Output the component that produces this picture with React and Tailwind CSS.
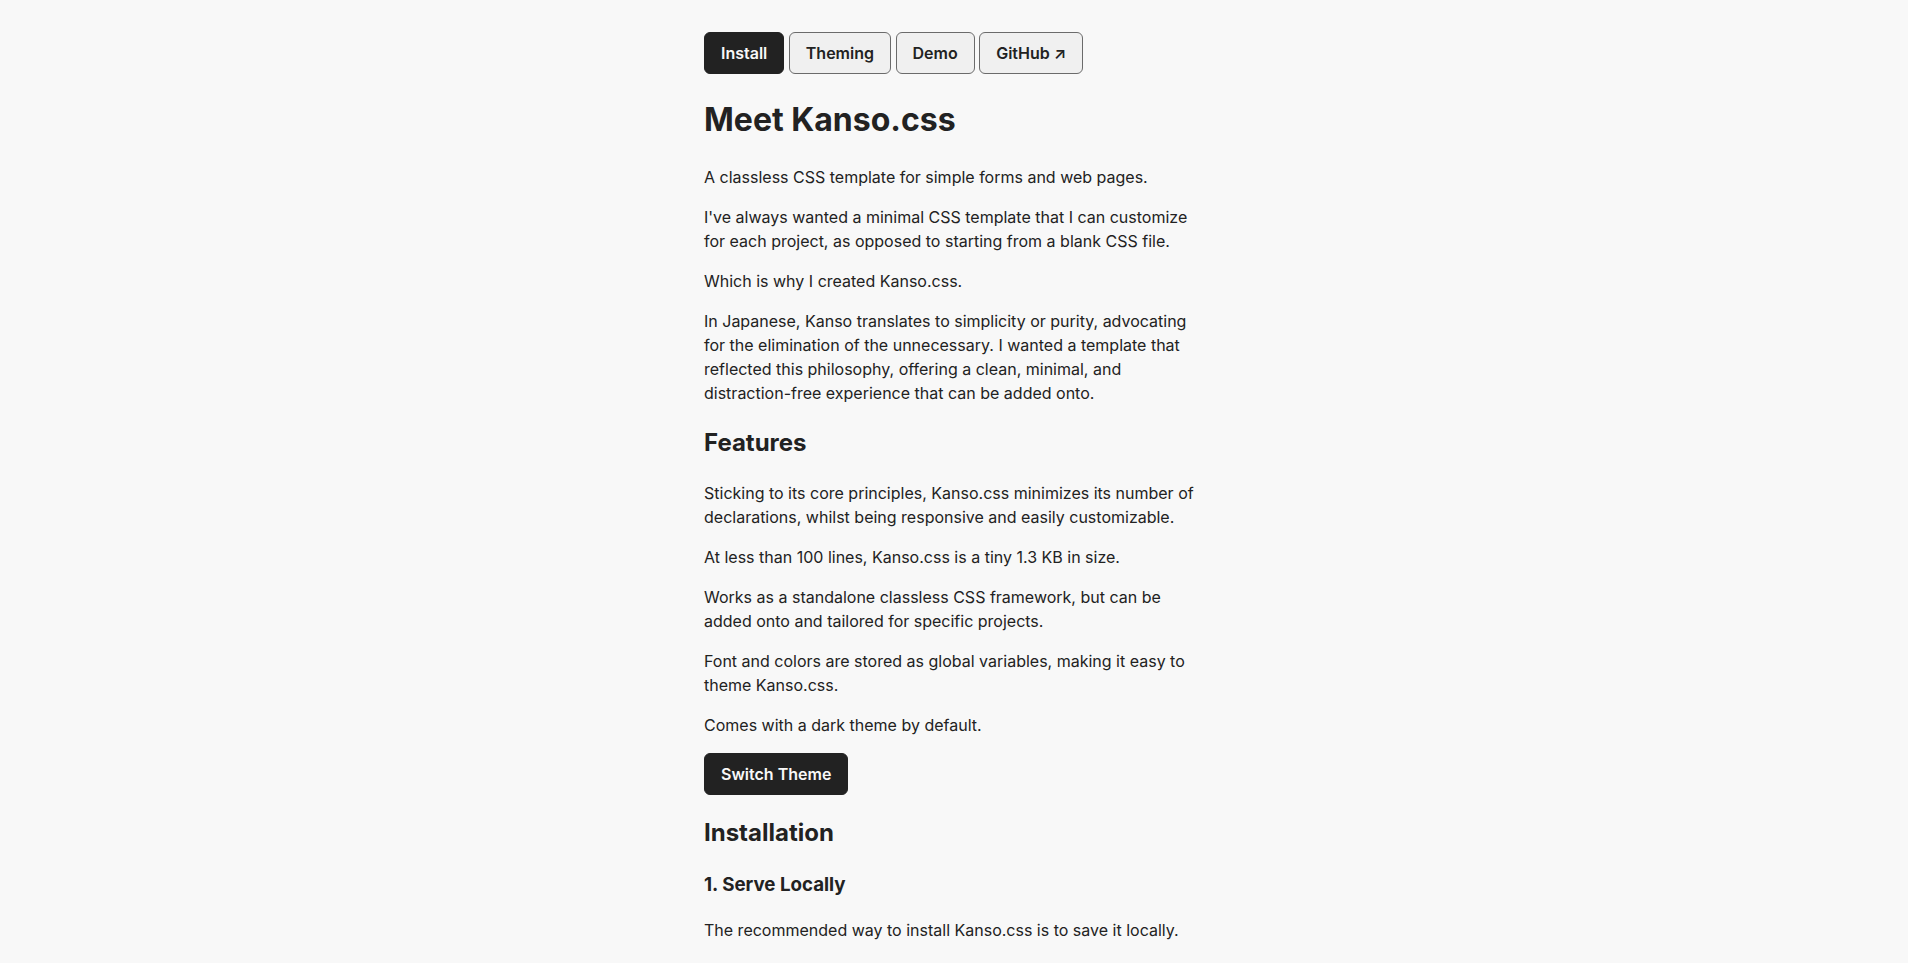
const NAV=[
  {label:"Install",active:true},
  {label:"Theming"},
  {label:"Demo"},
  {label:"GitHub ↗"},
];

const P=({children})=><p className="my-4">{children}</p>;

const App=()=>{
  return (
    <div className="min-h-screen bg-[#f8f8f8] text-[#222222] text-[16px] leading-[1.5]" style={{fontFamily:"Inter, 'Noto Sans', sans-serif"}}>
      <main className="mx-auto w-[500px] pt-[32px]">
        <nav className="flex gap-[4.5px]">
          {NAV.map(n=>(
            <button key={n.label}
              className={`px-4 py-2 leading-6 font-semibold rounded-[6px] border ${n.active?"bg-[#222222] border-[#222222] text-[#f8f8f8]":"bg-[#f0f0f0] border-[#6b6b6b] text-[#222222]"}`}>
              {n.label}
            </button>
          ))}
        </nav>

        <h1 className="text-[32px] leading-[48px] font-bold mt-[22px] mb-[21.44px]">Meet Kanso.css</h1>
        <P>A classless CSS template for simple forms and web pages.</P>
        <P>I've always wanted a minimal CSS template that I can customize for each project, as opposed to starting from a blank CSS file.</P>
        <P>Which is why I created Kanso.css.</P>
        <P>In Japanese, Kanso translates to simplicity or purity, advocating for the elimination of the unnecessary. I wanted a template that reflected this philosophy, offering a clean, minimal, and distraction-free experience that can be added onto.</P>

        <h2 className="text-[24px] leading-[36px] font-bold my-5">Features</h2>
        <P>Sticking to its core principles, Kanso.css minimizes its number of declarations, whilst being responsive and easily customizable.</P>
        <P>At less than 100 lines, Kanso.css is a tiny 1.3 KB in size.</P>
        <P>Works as a standalone classless CSS framework, but can be added onto and tailored for specific projects.</P>
        <P>Font and colors are stored as global variables, making it easy to theme Kanso.css.</P>
        <P>Comes with a dark theme by default.</P>
        <button className="px-4 py-2 leading-6 font-semibold rounded-[6px] border bg-[#222222] border-[#222222] text-[#f8f8f8]">Switch Theme</button>

        <h2 className="text-[24px] leading-[36px] font-bold my-5">Installation</h2>
        <h3 className="text-[18.72px] leading-[28px] font-bold mt-5 mb-[18.72px]">1. Serve Locally</h3>
        <p className="mt-4">The recommended way to install Kanso.css is to save it locally.</p>
      </main>
    </div>
  );
};

export default App;
